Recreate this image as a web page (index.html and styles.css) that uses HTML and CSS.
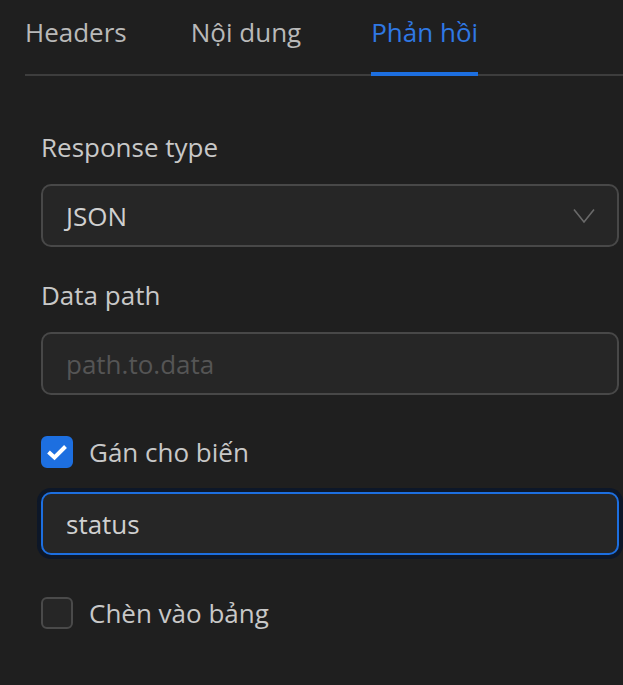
FILE: index.html
```html
<!DOCTYPE html>
<html>
<head>
    <title>Phản hồi</title>
    <link rel="stylesheet" href="styles.css">
</head>
<body>
    <div class="panel">
        <nav class="tabs">
            <div class="tab">Headers</div>
            <div class="tab">Nội dung</div>
            <div class="tab active">Phản hồi</div>
        </nav>

        <div class="form">
            <label class="field-label" for="responseType">Response type</label>
            <div class="select-box" id="responseType">
                <span>JSON</span>
                <svg class="chevron" width="22" height="16" viewBox="0 0 22 16">
                    <path d="M1 1.5 L11 14 L21 1.5" fill="none" stroke="#6a6a6a" stroke-width="1.6"/>
                </svg>
            </div>

            <label class="field-label label-gap" for="dataPath">Data path</label>
            <input class="text-input" id="dataPath" type="text" placeholder="path.to.data">

            <div class="check-row first-check">
                <span class="checkbox checked">
                    <svg width="22" height="18" viewBox="0 0 22 18">
                        <path d="M2.5 9 L8.5 14.5 L19.5 3.5" fill="none" stroke="#fff" stroke-width="4"/>
                    </svg>
                </span>
                <span class="check-label">Gán cho biến</span>
            </div>

            <input class="text-input focused" type="text" value="status">

            <div class="check-row last-check">
                <span class="checkbox"></span>
                <span class="check-label">Chèn vào bảng</span>
            </div>
        </div>
    </div>
</body>
</html>
```

FILE: styles.css
```css
/* General */
body {
    margin: 0;
    background-color: #1f1f1f;
    font-family: "Open Sans", "Noto Sans", sans-serif;
    color: #cccccc;
}
.panel {
    padding-top: 14px;
}

/* Tabs */
.tabs {
    display: flex;
    gap: 64px;
    margin-left: 25px;
    border-bottom: 2px solid #3d3d3d;
}
.tab {
    position: relative;
    font-size: 26px;
    line-height: 36px;
    padding-bottom: 24px;
    color: #b9b9b9;
}
.tab.active {
    margin-left: 6px;
    color: #2f78e4;
}
.tab.active::after {
    content: "";
    position: absolute;
    left: 0;
    right: 0;
    bottom: -2px;
    height: 4px;
    background-color: #1d6fe0;
}

/* Form */
.form {
    padding: 53px 4px 0 41px;
}
.field-label {
    display: block;
    font-size: 26px;
    line-height: 36px;
    color: #c8c8c8;
    margin-bottom: 19px;
}
.label-gap {
    margin-top: 30px;
}
.select-box,
.text-input {
    box-sizing: border-box;
    width: 100%;
    height: 63px;
    display: flex;
    align-items: center;
    justify-content: space-between;
    padding: 0 22px 0 23px;
    background-color: #262626;
    border: 2px solid #484848;
    border-radius: 10px;
    font-family: inherit;
    font-size: 26px;
    color: #d0d0d0;
    outline: none;
}
.text-input::placeholder {
    color: #555555;
}
.text-input.focused {
    border-color: #1d6fe0;
    box-shadow: 0 0 0 4px #0d1728;
}
.chevron {
    display: block;
}

/* Checkboxes */
.check-row {
    display: flex;
    align-items: center;
    gap: 16px;
}
.first-check {
    margin-top: 39px;
    margin-bottom: 22px;
}
.last-check {
    margin-top: 40px;
}
.checkbox {
    box-sizing: border-box;
    width: 32px;
    height: 32px;
    display: flex;
    align-items: center;
    justify-content: center;
    border: 2px solid #4a4a4a;
    border-radius: 6px;
    background-color: #262626;
}
.checkbox.checked {
    border-color: #1d6fe0;
    background-color: #1d6fe0;
}
.check-label {
    font-size: 26px;
    line-height: 36px;
    color: #c8c8c8;
}
```
